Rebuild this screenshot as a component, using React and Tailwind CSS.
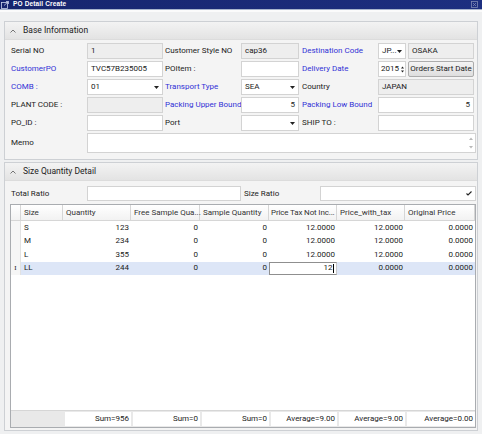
import React from "react";

// PO detail form: two collapsible group boxes, the second one holds the size grid

const Arrow = () => (
  <svg width="5" height="3" viewBox="0 0 5 3" className="shrink-0">
    <path d="M0 0h5L2.5 3z" fill="#222" />
  </svg>
);

const Caret = () => (
  <svg width="6" height="4" viewBox="0 0 6 4" className="shrink-0">
    <path d="M0.5 3.5L3 1l2.5 2.5" fill="none" stroke="#666" strokeWidth="0.9" />
  </svg>
);

const Label = ({ children, blue, className = "" }) => (
  <div
    className={`h-4 flex items-center whitespace-nowrap ${blue ? "text-[#3232d6]" : "text-[#222]"} ${className}`}
  >
    {children}
  </div>
);

const Input = ({ value = "", readOnly, right, className = "" }) => (
  <div
    className={`h-4 flex items-center px-[3px] border border-[#d3d3d3] whitespace-nowrap overflow-hidden ${readOnly ? "bg-[#eeeeee]" : "bg-white"} ${right ? "justify-end" : ""} ${className}`}
  >
    {value}
  </div>
);

const Combo = ({ value = "", className = "" }) => (
  <div
    className={`h-4 flex items-center justify-between pl-[3px] pr-[3px] border border-[#d3d3d3] bg-white ${className}`}
  >
    <span className="whitespace-nowrap">{value}</span>
    <Arrow />
  </div>
);

const GroupHeader = ({ title }) => (
  <div className="h-[18px] shrink-0 flex items-center gap-[7px] pl-[5px] bg-linear-to-b from-[#f3f3f3] to-[#e3e3e3] border-b border-[#dcdcdc]">
    <Caret />
    <span className="text-[8.5px] text-[#222]">{title}</span>
  </div>
);

const rows = [
  { size: "S", qty: "123", price: "12.0000", withTax: "12.0000" },
  { size: "M", qty: "234", price: "12.0000", withTax: "12.0000" },
  { size: "L", qty: "355", price: "12.0000", withTax: "12.0000" },
];

const footer = [
  { w: "w-[68px]", text: "Sum=956" },
  { w: "w-[69px]", text: "Sum=0" },
  { w: "w-[69px]", text: "Sum=0" },
  { w: "w-[68px]", text: "Average=9.00" },
  { w: "w-[68px]", text: "Average=9.00" },
  { w: "w-[70px]", text: "Average=0.00" },
];

export default function App() {
  return (
    <div className="w-[482px] h-[434px] overflow-hidden flex flex-col bg-[#eff0f1] font-['Roboto',sans-serif] text-[8px] text-[#222]">
      {/* title bar */}
      <div className="h-[9px] shrink-0 flex items-center justify-between bg-linear-to-r from-[#16256e] to-[#1d2f80] pl-[1px] pr-[4px]">
        <div className="flex items-center gap-[4px]">
          <svg width="8" height="8" viewBox="0 0 8 8">
            <rect x="0.5" y="1.5" width="6" height="6" fill="none" stroke="#c9d2ea" strokeWidth="0.8" />
            <path d="M3 4.5L7.5 0.5M5 0.5h2.5V3" fill="none" stroke="#c9d2ea" strokeWidth="0.8" />
          </svg>
          <span className="font-['Liberation_Sans',sans-serif] font-bold text-[6.5px] tracking-[0.15px] text-white leading-none">
            PO Detail Create
          </span>
        </div>
        <svg width="7" height="7" viewBox="0 0 7 7">
          <rect x="0.5" y="0.5" width="6" height="6" fill="none" stroke="#7d88b4" strokeWidth="0.8" />
          <path d="M2 2l3 3M5 2l-3 3" stroke="#7d88b4" strokeWidth="0.8" />
        </svg>
      </div>
      <div className="h-[1px] shrink-0 bg-[#a7b4cc]" />
      <div className="h-[2px] shrink-0 bg-[#fbfbfb]" />

      <div className="flex-1 flex flex-col gap-[2px] pt-[9px] pb-[3px] pl-[4px] pr-[4px] min-h-0">
        {/* Base Information */}
        <div className="shrink-0 border border-[#cdd0d4] bg-[#f4f4f4]">
          <GroupHeader title="Base Information" />
          <div className="grid grid-cols-[76px_76px_78px_58px_79px_96px] gap-y-[2px] pl-[6px] pt-[3px] pb-[6px]">
            <Label>Serial NO</Label>
            <Input value="1" readOnly />
            <Label className="pl-[2px]">Customer Style NO</Label>
            <Input value="cap36" readOnly />
            <Label blue className="pl-[3px]">Destination Code</Label>
            <div className="flex gap-[2px]">
              <Combo value="JP..." className="w-[28px]" />
              <Input value="OSAKA" readOnly className="flex-1" />
            </div>

            <Label blue>CustomerPO</Label>
            <Input value="TVC57B235005" />
            <Label className="pl-[2px]">POItem :</Label>
            <Input />
            <Label blue className="pl-[3px]">Delivery Date</Label>
            <div className="flex gap-[2px]">
              <div className="w-[28px] h-4 flex items-center justify-between pl-[2px] pr-[1px] border border-[#d3d3d3] bg-white">
                <span>2015</span>
                <svg width="3" height="7" viewBox="0 0 3 7">
                  <path d="M0 2.5h3L1.5 0.5z" fill="#222" />
                  <path d="M0 4.5h3L1.5 6.5z" fill="#222" />
                </svg>
              </div>
              <div className="flex-1 h-4 flex items-center justify-center border border-[#acacac] rounded-[2px] bg-linear-to-b from-[#f4f4f4] to-[#dedede] whitespace-nowrap">
                Orders Start Date
              </div>
            </div>

            <Label blue>COMB :</Label>
            <Combo value="01" />
            <Label blue className="pl-[2px]">Transport Type</Label>
            <Combo value="SEA" />
            <Label className="pl-[3px]">Country</Label>
            <Input value="JAPAN" readOnly />

            <Label>PLANT CODE :</Label>
            <Input readOnly />
            <Label blue className="pl-[2px]">Packing Upper Bound</Label>
            <Input value="5" right />
            <Label blue className="pl-[3px]">Packing Low Bound</Label>
            <Input value="5" right />

            <Label>PO_ID :</Label>
            <Input />
            <Label className="pl-[2px]">Port</Label>
            <Combo />
            <Label className="pl-[3px]">SHIP TO :</Label>
            <Input />

            <div className="h-5 flex items-center">Memo</div>
            <div className="col-span-5 h-5 mr-[-2px] flex justify-end border border-[#d3d3d3] bg-white pr-[2px]">
              <div className="flex flex-col justify-between py-[3px]">
                <svg width="4" height="3" viewBox="0 0 4 3">
                  <path d="M0 3h4L2 0.5z" fill="#b8b8b8" />
                </svg>
                <svg width="4" height="3" viewBox="0 0 4 3">
                  <path d="M0 0h4L2 2.5z" fill="#b8b8b8" />
                </svg>
              </div>
            </div>
          </div>
        </div>

        {/* Size Quantity Detail */}
        <div className="flex-1 min-h-0 flex flex-col border border-[#cdd0d4] bg-[#f4f4f4]">
          <GroupHeader title="Size Quantity Detail" />
          <div className="flex-1 min-h-0 flex flex-col pl-[5px] pr-[1px] pt-[5px] pb-[2px]">
            <div className="h-[15px] shrink-0 flex items-center pl-[1px]">
              <div className="w-[76px]">Total Ratio</div>
              <div className="w-[154px] h-[15px] border border-[#d3d3d3] bg-white" />
              <div className="w-[79px] pl-[3px]">Size Ratio</div>
              <div className="flex-1 h-[15px] flex items-center justify-end pr-[3px] border border-[#d3d3d3] bg-white">
                <svg width="6" height="5" viewBox="0 0 6 5">
                  <path d="M0.5 2.5L2 4 5.5 0.5" fill="none" stroke="#222" strokeWidth="1.1" />
                </svg>
              </div>
            </div>

            {/* grid */}
            <div className="flex-1 min-h-0 mt-[3px] flex flex-col border border-[#a9acb0] bg-white">
              <div className="h-[16px] shrink-0 flex border-b border-[#d6d6d6] bg-linear-to-b from-white to-[#f2f2f2] text-[#333]">
                <div className="w-[10px] border-r border-[#d6d6d6]" />
                <div className="w-[42px] border-r border-[#d6d6d6] pl-[3px] flex items-center">Size</div>
                <div className="w-[68px] border-r border-[#d6d6d6] pl-[3px] flex items-center">Quantity</div>
                <div className="w-[69px] border-r border-[#d6d6d6] pl-[3px] flex items-center whitespace-nowrap">Free Sample Qua...</div>
                <div className="w-[69px] border-r border-[#d6d6d6] pl-[3px] flex items-center whitespace-nowrap">Sample Quantity</div>
                <div className="w-[68px] border-r border-[#d6d6d6] pl-[2px] flex items-center whitespace-nowrap tracking-[-0.15px]">Price Tax Not Inc...</div>
                <div className="w-[68px] border-r border-[#d6d6d6] pl-[3px] flex items-center">Price_with_tax</div>
                <div className="w-[70px] border-r border-[#d6d6d6] pl-[3px] flex items-center">Original Price</div>
              </div>

              {rows.map((r) => (
                <div key={r.size} className="h-[13.5px] shrink-0 flex items-center">
                  <div className="w-[10px] h-full bg-[#f6f6f6] border-r border-[#e2e2e2]" />
                  <div className="w-[42px] pl-[3px]">{r.size}</div>
                  <div className="w-[68px] text-right pr-[2px]">{r.qty}</div>
                  <div className="w-[69px] text-right pr-[2px]">0</div>
                  <div className="w-[69px] text-right pr-[2px]">0</div>
                  <div className="w-[68px] text-right pr-[2px]">{r.price}</div>
                  <div className="w-[68px] text-right pr-[2px]">{r.withTax}</div>
                  <div className="w-[70px] text-right pr-[2px]">0.0000</div>
                </div>
              ))}

              <div className="h-[13.5px] shrink-0 flex items-center">
                <div className="w-[10px] h-full bg-[#f6f6f6] border-r border-[#e2e2e2] flex items-center justify-center font-['Liberation_Serif',serif] text-[7px]">
                  I
                </div>
                <div className="flex h-full items-center bg-[#dde6f7]">
                  <div className="w-[42px] pl-[3px]">LL</div>
                  <div className="w-[68px] text-right pr-[2px]">244</div>
                  <div className="w-[69px] text-right pr-[2px]">0</div>
                  <div className="w-[69px] text-right pr-[2px]">0</div>
                  <div className="w-[68px] h-full flex items-center justify-end pr-[2px] bg-white border border-[#8f8f8f] border-r-[#c8c8c8]">
                    12
                    <span className="w-[1px] h-[9px] bg-black ml-[0.5px]" />
                  </div>
                  <div className="w-[68px] text-right pr-[2px]">0.0000</div>
                  <div className="w-[70px] text-right pr-[2px]">0.0000</div>
                </div>
              </div>

              <div className="flex-1" />

              <div className="h-[17px] shrink-0 flex items-stretch py-[1px] bg-[#e9e9e9] border-t border-[#d6d6d6]">
                <div className="w-[52px]" />
                {footer.map((f, i) => (
                  <div key={i} className={`${f.w} pl-[2px] flex`}>
                    <div className="flex-1 bg-white flex items-center justify-end pr-[2px]">{f.text}</div>
                  </div>
                ))}
              </div>
            </div>
          </div>
        </div>
      </div>
    </div>
  );
}
